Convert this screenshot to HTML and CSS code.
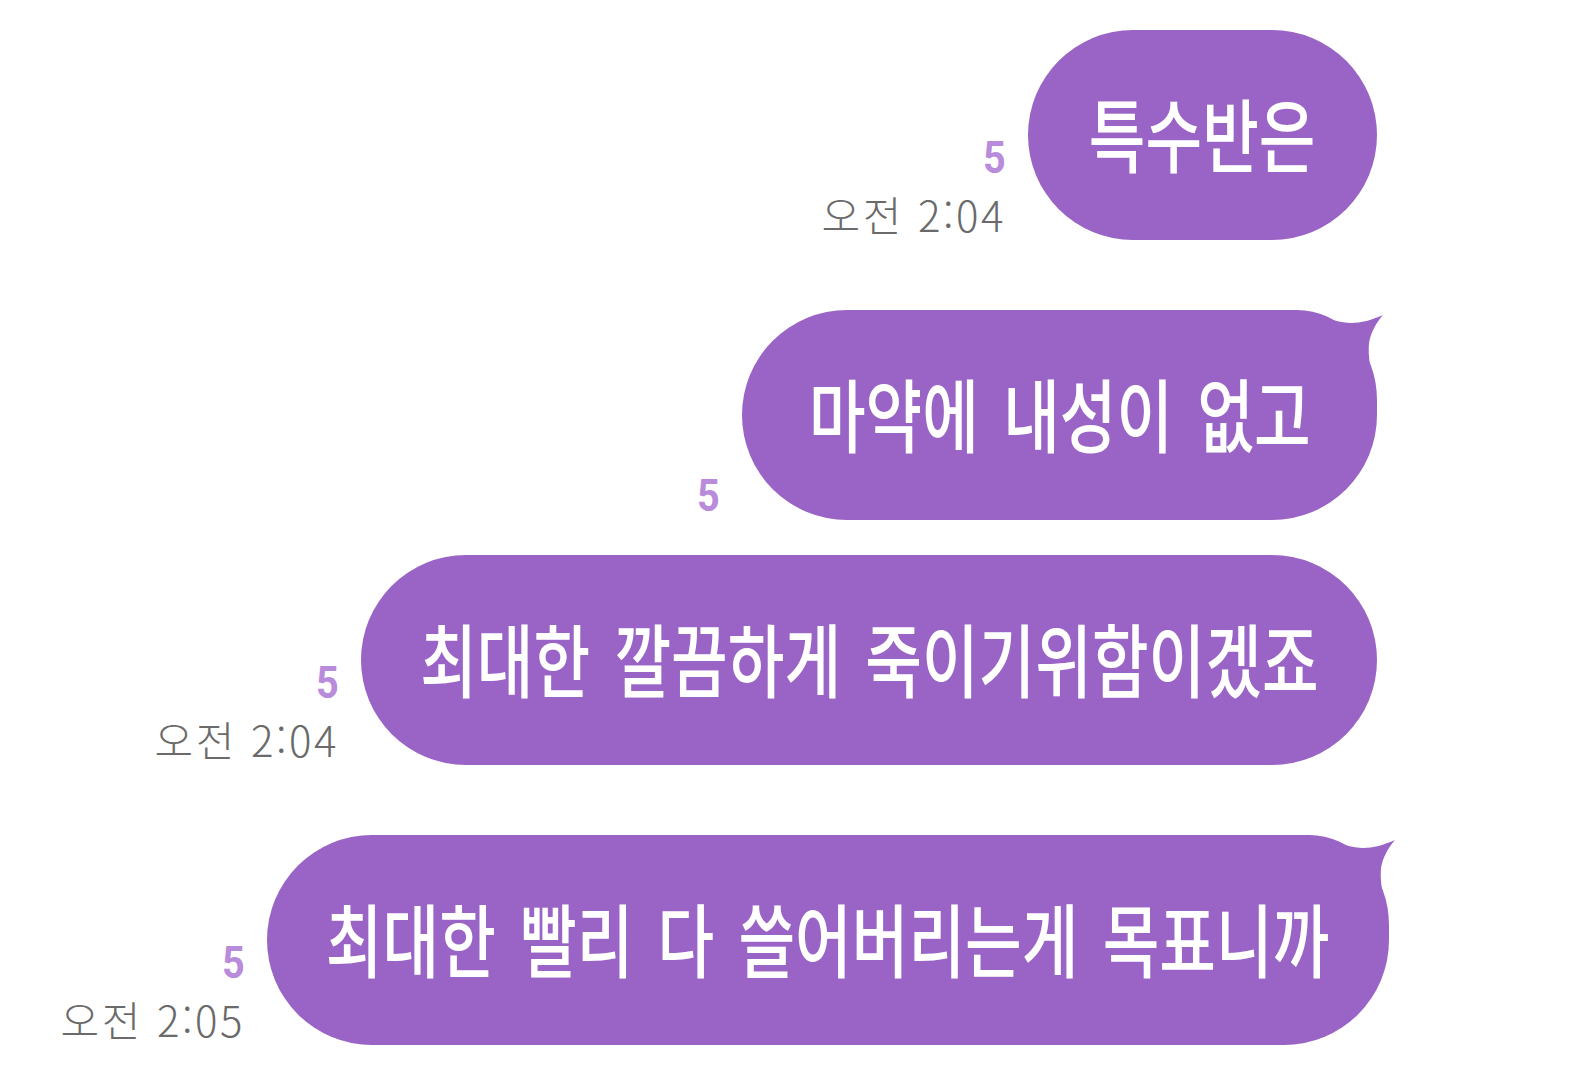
FILE: index.html
```html
<!DOCTYPE html>
<html lang="ko">
<head>
<meta charset="utf-8">
<title>Chat</title>
<link rel="stylesheet" href="styles.css">
</head>
<body>
<div class="chat">
  <div class="row">
    <div class="meta"><span class="read">5</span><span class="time">오전 2:04</span></div>
    <div class="bubble w1"><span class="msg">특수반은</span></div>
  </div>
  <div class="row gap-lg">
    <div class="meta"><span class="read">5</span></div>
    <div class="bubble tail w2">
      <svg class="tail-shape" viewBox="0 0 90 70" width="90" height="70"><path d="M20,5 C34,9 46,13 56,13 C66,13 77,10 88,5 C81,13 76,22 74,33 C73,46 75,56 78,68 L54,68 Z"/></svg>
      <span class="msg">마약에 내성이 없고</span>
    </div>
  </div>
  <div class="row gap-sm">
    <div class="meta"><span class="read">5</span><span class="time">오전 2:04</span></div>
    <div class="bubble w3"><span class="msg">최대한 깔끔하게 죽이기위함이겠죠</span></div>
  </div>
  <div class="row gap-lg shift">
    <div class="meta"><span class="read">5</span><span class="time">오전 2:05</span></div>
    <div class="bubble tail w4">
      <svg class="tail-shape" viewBox="0 0 90 70" width="90" height="70"><path d="M20,5 C34,9 46,13 56,13 C66,13 77,10 88,5 C81,13 76,22 74,33 C73,46 75,56 78,68 L54,68 Z"/></svg>
      <span class="msg">최대한 빨리 다 쓸어버리는게 목표니까</span>
    </div>
  </div>
</div>
</body>
</html>
```
FILE: styles.css
```css
html, body {
  margin: 0;
  padding: 0;
  background: #ffffff;
}

body {
  width: 1569px;
  height: 1080px;
  overflow: hidden;
  font-family: "Noto Sans CJK KR", "Noto Sans", sans-serif;
}

.chat {
  display: flex;
  flex-direction: column;
  padding: 30px 192px 0 0;
}

.row {
  display: flex;
  justify-content: flex-end;
  align-items: flex-end;
  gap: 22px;
}

.gap-lg { margin-top: 70px; }
.gap-sm { margin-top: 35px; }
.shift { margin-right: -12px; }

.meta {
  display: flex;
  flex-direction: column;
  align-items: flex-end;
  padding-bottom: 2px;
}

.read {
  font-family: Roboto, "Noto Sans", sans-serif;
  font-weight: 700;
  font-size: 45px;
  line-height: 44px;
  color: #b98cdb;
  display: inline-block;
  transform: scaleX(0.88);
  transform-origin: right center;
}

.read + .time {
  margin-top: 10px;
}

.time {
  font-size: 42px;
  font-weight: 300;
  line-height: 48px;
  color: #6a6a6a;
  letter-spacing: 2.5px;
  white-space: nowrap;
}

.bubble {
  position: relative;
  height: 210px;
  border-radius: 105px;
  background: #9964c6;
  display: flex;
  align-items: center;
  justify-content: center;
  flex-shrink: 0;
}

.bubble.tail {
  border-top-right-radius: 80px 90px;
}

.tail-shape {
  position: absolute;
  top: 0;
  right: -8px;
  fill: #9964c6;
}

.w1 { width: 349px; }
.w2 { width: 635px; }
.w3 { width: 1016px; }
.w4 { width: 1122px; }

.msg {
  position: relative;
  display: inline-block;
  flex-shrink: 0;
  white-space: nowrap;
  color: #ffffff;
  font-size: 80px;
  font-weight: 500;
  line-height: 1;
  word-spacing: 9px;
  transform: translateY(-4px) scaleX(0.77);
  transform-origin: center center;
}
```
